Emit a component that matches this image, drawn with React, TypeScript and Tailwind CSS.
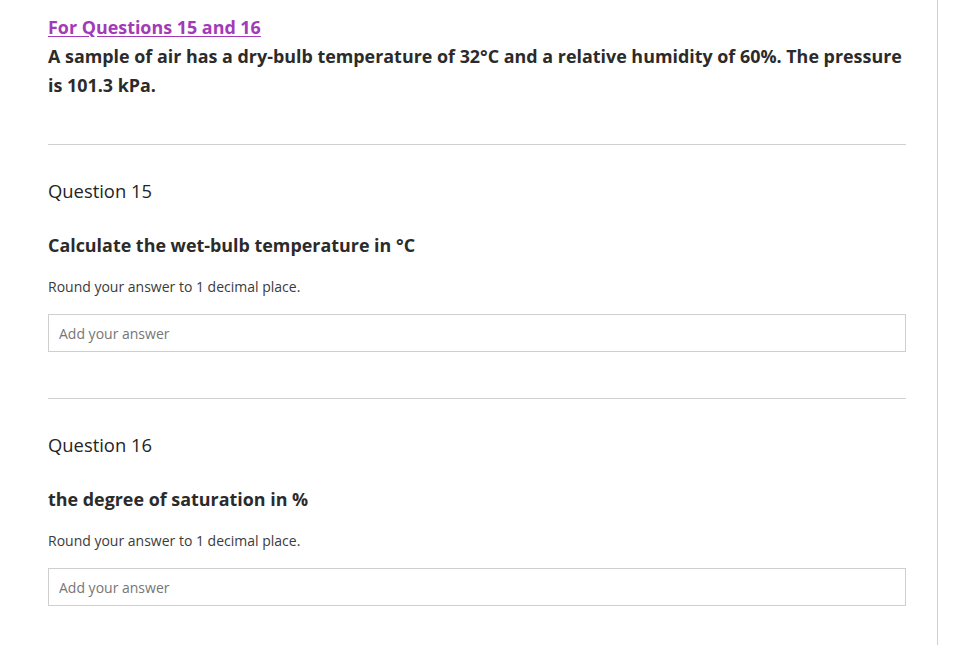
import React from 'react';

interface QuestionProps {
  number: number;
  prompt: string;
}

const Question: React.FC<QuestionProps> = ({ number, prompt }) => (
  <div className="border-t border-[#d0d0d0] pt-[34px] pb-[46px]">
    <p className="text-[18.4px] leading-[24px] text-[#242424]">Question {number}</p>
    <p className="mt-[30px] text-[17.9px] font-bold leading-[24px] text-[#2b2b2b]">{prompt}</p>
    <p className="mt-[20px] text-[14px] leading-[20px] text-[#3b3b3b]">Round your answer to 1 decimal place.</p>
    <input
      type="text"
      placeholder="Add your answer"
      className="mt-[17px] block h-[38px] w-full border border-[#cfcfcf] bg-white px-[10px] text-[14px] text-[#242424] placeholder:text-[#767676] outline-none"
    />
  </div>
);

export default function App() {
  return (
    <div
      className="flex h-[645px] w-[958px] overflow-hidden bg-white"
      style={{ fontFamily: '"Open Sans", "Liberation Sans", sans-serif' }}
    >
      <div className="w-[937px] shrink-0 pl-[48px] pr-[31px]">
        <div className="pt-[13px] pb-[44px]">
          <a href="#" className="text-[17.9px] font-bold leading-[29px] text-[#a33ab8] underline underline-offset-2">
            For Questions 15 and 16
          </a>
          <p className="-mr-[4px] text-[17.9px] font-bold leading-[29px] text-[#2b2b2b]">
            A sample of air has a dry-bulb temperature of 32°C and a relative humidity of 60%. The pressure is 101.3 kPa.
          </p>
        </div>
        <Question number={15} prompt="Calculate the wet-bulb temperature in °C" />
        <Question number={16} prompt="the degree of saturation in %" />
      </div>
      <div className="h-full w-px bg-[#d0d0d0]" />
    </div>
  );
}
